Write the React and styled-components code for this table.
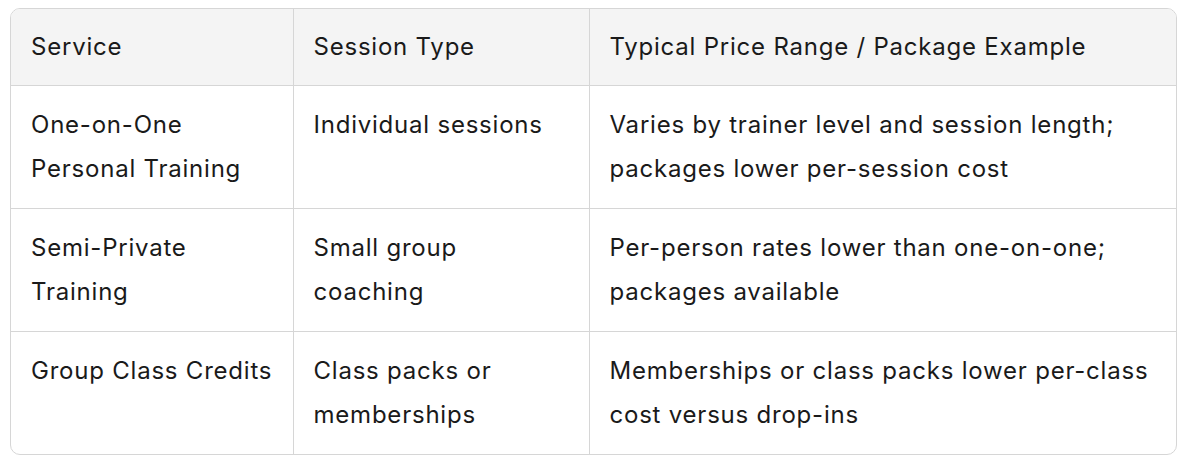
import React from "react";
import styled, { createGlobalStyle } from "styled-components";

const GlobalStyle = createGlobalStyle`
  body {
    margin: 0;
    background: #ffffff;
    font-family: Inter, "Noto Sans", sans-serif;
  }
`;

const Page = styled.div`
  padding: 8px 11px 0 10px;
`;

const TableWrap = styled.div`
  border: 1px solid #d6d6d6;
  border-radius: 10px;
  overflow: hidden;
`;

const Table = styled.table`
  width: 100%;
  border-collapse: collapse;
  table-layout: fixed;
  color: #1a1a1a;
  font-size: 24px;
  letter-spacing: 0.78px;
  line-height: 44px;
`;

const HeadCell = styled.th`
  background: #f4f4f4;
  font-weight: 400;
  text-align: left;
  padding: 16px 20px;
  border-bottom: 1px solid #d6d6d6;
  border-left: ${(p) => (p.$first ? "none" : "1px solid #d6d6d6")};
`;

const Cell = styled.td`
  vertical-align: top;
  padding: 17px 20px;
  border-top: ${(p) => (p.$firstRow ? "none" : "1px solid #d6d6d6")};
  border-left: ${(p) => (p.$first ? "none" : "1px solid #d6d6d6")};
`;

const columns = ["Service", "Session Type", "Typical Price Range / Package Example"];
const widths = [282, 296, null];

const rows = [
  [
    "One-on-One Personal Training",
    "Individual sessions",
    "Varies by trainer level and session length; packages lower per-session cost",
  ],
  [
    "Semi-Private Training",
    "Small group coaching",
    "Per-person rates lower than one-on-one; packages available",
  ],
  [
    "Group Class Credits",
    "Class packs or memberships",
    "Memberships or class packs lower per-class cost versus drop-ins",
  ],
];

const App = () => {
  return (
    <Page>
      <GlobalStyle />
      <TableWrap>
        <Table>
          <colgroup>
            {widths.map((w, i) => (
              <col key={i} style={w ? { width: w } : undefined} />
            ))}
          </colgroup>
          <thead>
            <tr>
              {columns.map((c, i) => (
                <HeadCell key={c} $first={i === 0}>
                  {c}
                </HeadCell>
              ))}
            </tr>
          </thead>
          <tbody>
            {rows.map((row, r) => (
              <tr key={r}>
                {row.map((text, i) => (
                  <Cell key={i} $first={i === 0} $firstRow={r === 0}>
                    {text}
                  </Cell>
                ))}
              </tr>
            ))}
          </tbody>
        </Table>
      </TableWrap>
    </Page>
  );
};

export default App;
